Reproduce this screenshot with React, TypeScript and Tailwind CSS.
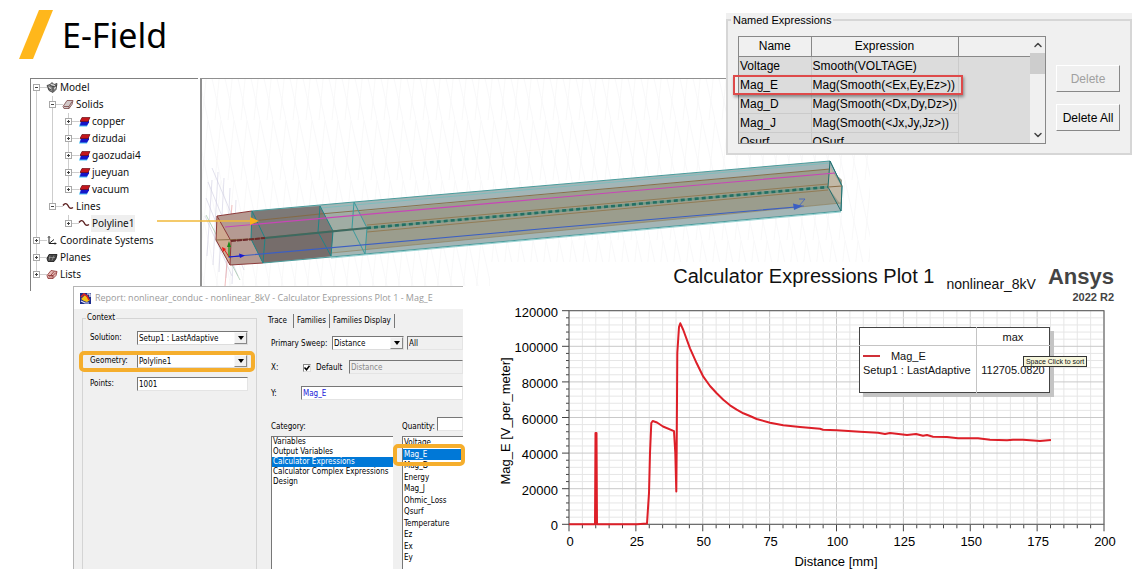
import { useState } from "react";
import { ChevronDown, ChevronUp } from "lucide-react";

type IconName = "model" | "solids" | "material" | "curve" | "axes" | "planes" | "lists";

type Node = {
  label: string;
  level: number;
  icon: IconName;
  open?: boolean;
  last?: boolean;
  guides: number[];
  selected?: boolean;
};

const NODES: Node[] = [
  { label: "Model", level: 0, icon: "model", open: true, guides: [] },
  { label: "Solids", level: 1, icon: "solids", open: true, guides: [0] },
  { label: "copper", level: 2, icon: "material", guides: [0, 1] },
  { label: "dizudai", level: 2, icon: "material", guides: [0, 1] },
  { label: "gaozudai4", level: 2, icon: "material", guides: [0, 1] },
  { label: "jueyuan", level: 2, icon: "material", guides: [0, 1] },
  { label: "vacuum", level: 2, icon: "material", guides: [0, 1], last: true },
  { label: "Lines", level: 1, icon: "curve", open: true, guides: [0], last: true },
  { label: "Polyline1", level: 2, icon: "curve", guides: [0], last: true, selected: true },
  { label: "Coordinate Systems", level: 0, icon: "axes", guides: [] },
  { label: "Planes", level: 0, icon: "planes", guides: [] },
  { label: "Lists", level: 0, icon: "lists", guides: [], last: true },
];

const EXPRESSIONS = [
  ["Voltage", "Smooth(VOLTAGE)"],
  ["Mag_E", "Mag(Smooth(<Ex,Ey,Ez>))"],
  ["Mag_D", "Mag(Smooth(<Dx,Dy,Dz>))"],
  ["Mag_J", "Mag(Smooth(<Jx,Jy,Jz>))"],
  ["Qsurf", "QSurf"],
];

const CATEGORIES = [
  "Variables",
  "Output Variables",
  "Calculator Expressions",
  "Calculator Complex Expressions",
  "Design",
];

const QUANTITIES = [
  "Voltage",
  "Mag_E",
  "Mag_D",
  "Energy",
  "Mag_J",
  "Ohmic_Loss",
  "Qsurf",
  "Temperature",
  "Ez",
  "Ex",
  "Ey",
];

function NodeIcon({ name, x }: { name: IconName; x: number }) {
  return (
    <g transform={`translate(${x} 8.5)`} fill="none">
      {name === "model" && (
        <g stroke="#333" strokeWidth="0.8">
          <path d="M-5-2 L-2-3 L0-5 L2-3 L5-4 L4 2 L1 5 L-3 3 Z" fill="#8a8a8a" />
          <path d="M-2-2 L1-1 L1 4 M1-1 L5-2 M-4 1 L-1 2" />
          <path d="M-1-3 L3-2 M2 1 L4 0 M-3 0 L-1 1" stroke="#fff" />
        </g>
      )}
      {name === "solids" && (
        <g stroke="#7a4545" strokeWidth="0.8">
          <path d="M-5 2 L-1-4 H5 L4 0 L1 4 L-4 4 Z" fill="#d2c8c8" />
          <path d="M-4 2 H1 L4-3 M1 2 V4" />
        </g>
      )}
      {name === "material" && (
        <g>
          <path d="M-4 2 H4 L3 5 H-5 Z" fill="#46bff5" />
          <path d="M-3-1 H5 V1 L3 4 H-4 Z" fill="#1616c8" />
          <path d="M-2-4 H6 L4 0 H-4 Z" fill="#c4161c" stroke="#6a0f14" strokeWidth="0.7" />
        </g>
      )}
      {name === "curve" && (
        <path d="M-5-1 C-3-4-1-3 0-1 S2 3 5 1" stroke="#5a1e1e" strokeWidth="1.4" />
      )}
      {name === "axes" && (
        <g stroke="#222" strokeWidth="1">
          <path d="M-3-4 V3 H4 M-3 3 L2-1" />
          <path d="M-4-3 L-3-4 L-2-3 M3 2 L4 3 L3 4" />
        </g>
      )}
      {name === "planes" && (
        <g stroke="#111" strokeWidth="0.8">
          <path d="M-5 1 L-3-3 H5 L4 1 L2 4 H-4 Z" fill="#444" />
          <path d="M-3 0 H3 M-2-2 L-3 3 M2-2 L0 3" stroke="#bbb" strokeWidth="0.5" />
        </g>
      )}
      {name === "lists" && (
        <g stroke="#8a2f2f" strokeWidth="0.8">
          <path d="M-5 1 L-1-4 L5-3 L4 1 L1 4 L-4 4 Z" fill="#e5b9b5" />
          <path d="M-3 3 L2-3 M-1 3 L4-2 M-4 1 H1 L1 4" />
        </g>
      )}
    </g>
  );
}

function TreeRow({ node }: { node: Node }) {
  const cx = 5 + node.level * 16;
  const top = node.label === "Model" ? 8 : 0;
  return (
    <li className="flex h-[17px] items-center">
      <svg
        width={cx + 24}
        height="17"
        className="block shrink-0"
        shapeRendering="crispEdges"
      >
        <g stroke="#cdcdcd">
          {node.guides.map((g) => (
            <line key={g} x1={5.5 + g * 16} x2={5.5 + g * 16} y1="0" y2="17" />
          ))}
          <line x1={cx + 0.5} x2={cx + 0.5} y1={top} y2={node.last ? 8 : 17} />
          <line x1={cx} x2={cx + 11} y1="8.5" y2="8.5" />
        </g>
        <rect x={cx - 2.5} y="5.5" width="6" height="6" fill="#fff" stroke="#a8a8a8" />
        <path
          d={`M${cx - 1} 8.5 h3${node.open ? "" : ` M${cx + 0.5} 7 v3`}`}
          stroke="#444"
        />
        <g shapeRendering="geometricPrecision">
          <NodeIcon name={node.icon} x={cx + 16} />
        </g>
      </svg>
      <span
        className={
          node.selected
            ? "-ml-px bg-[#efefef] px-px text-[10px] leading-[17px]"
            : "text-[10px] leading-[17px]"
        }
      >
        {node.label}
      </span>
    </li>
  );
}

function ModelTree() {
  return (
    <nav className="w-[168px] shrink-0 border-t border-l border-[#808080] pb-2 text-[#111] font-['Noto_Sans','Open_Sans',sans-serif]">
      <ul>
        {NODES.map((n) => (
          <TreeRow key={n.label} node={n} />
        ))}
      </ul>
    </nav>
  );
}

function Scene() {
  return (
    <svg
      viewBox="202 79 668 207"
      className="block w-full max-w-[668px]"
      role="img"
      aria-label="Model view"
    >
      <defs>
        <pattern id="mesh" width="13" height="60" patternUnits="userSpaceOnUse">
          <path d="M0 0 L13 60 M13 0 L7 60" stroke="#f6f6f7" strokeWidth="0.8" fill="none" />
        </pattern>
      </defs>
      <rect x="202" y="79" width="668" height="207" fill="url(#mesh)" />

      {/* reference grid at the origin */}
      <path
        d="M212 168 L250 258 M208 182 L244 270 M206 198 L238 276 M205 216 L232 276 M218 172 L213 265 M224 178 L219 272 M212 180 L207 256 M230 188 L226 278 M236 200 L232 284"
        stroke="#cfcde0"
        strokeWidth="0.6"
        fill="none"
      />
      <path d="M232 205 L225 286" stroke="#eba0a0" strokeWidth="0.7" />
      <path d="M206 215 L240 280" stroke="#9cc3a4" strokeWidth="0.7" />

      {/* insulation */}
      <path d="M252 211 L354 202 L830 161 L842 186 L841 211 L365 254 L263 263 L251 239 Z" fill="#a3b5b6" />
      <path d="M320 215 L830 169 L842 180 L841 203 L331 253 Z" fill="#9b9d8d" />
      <path d="M320 206 L354 202 L367 228 L365 254 L331 256 L333 231 Z" fill="#a4b8b4" fillOpacity="0.6" />
      <path d="M828 187 L830 167 L842 187 L841 205 Z" fill="#c2b8a6" />

      {/* electrode blocks */}
      <path d="M217 216 L252 211 L265 238 L263 263 L230 265 L216 240 Z" fill="#b59a92" />
      <path d="M217 216 L231 241 L230 265 L216 240 Z" fill="#cfab92" />
      <path d="M252 211 L320 206 L333 231 L331 256 L263 263 L251 239 Z" fill="#7d7977" />
      <path d="M251 239 L333 231 L331 256 L263 263 Z" fill="#766d6b" />

      {/* edges */}
      <g fill="none" strokeWidth="1">
        <path d="M217 216 L252 211 M217 216 L231 241 L230 265 L216 240 Z M230 265 L263 263 M231 241 L265 238" stroke="#8c3a3a" />
        <path d="M216 240 L251 239 L352 229 M252 221 L320 214 L830 169" stroke="#86683f" strokeWidth="0.9" />
        <path d="M367 225 L828 184 M367 232 L828 190" stroke="#8f7448" strokeWidth="0.8" />
        <path d="M331 253 L841 203" stroke="#8f7d58" strokeWidth="0.6" />
        <path d="M252 211 L354 202 L830 161 L842 186 L841 211 L365 254 L263 263" stroke="#4a9c9c" />
        <path d="M320 208 L830 163 M331 258 L841 212" stroke="#6fc0c0" strokeWidth="0.7" />
        <path d="M252 211 L265 238 L263 263 L251 239 Z M320 206 L333 231 L331 256 L318 232 Z" stroke="#1e8486" />
        <path d="M354 202 L367 228 L365 254 L352 228 Z" stroke="#3a9a9c" />
        <path d="M830 161 L842 186 L841 211 L828 187 Z" stroke="#236f6f" />
        <path d="M828 187 L842 186" stroke="#8b6c46" />
      </g>
      <path d="M231 241 L265 238" stroke="#6d2a2a" strokeWidth="2" strokeDasharray="5 1" />
      <path d="M265 238 L367 228" stroke="#3d6a60" strokeWidth="2" />
      <path d="M367 228 L828 187" stroke="#6f9a86" strokeWidth="2.6" />
      <path d="M367 228 L828 187" stroke="#236f64" strokeWidth="2.6" strokeDasharray="4 3" />

      <path d="M225 227 L540 199 L835 173" stroke="#c846b8" strokeWidth="1.2" fill="none" />
      <path d="M228 257 L540 229 L796 207" stroke="#3b5fc4" strokeWidth="1.1" fill="none" />
      <path d="M793 203.500 L803 206 L794 210 Z" fill="#3b5fc4" />
      <path d="M799 199 H805 L799 206 H804" stroke="#3b5fc4" strokeWidth="0.8" fill="none" />

      {/* local axes */}
      <path d="M229 257 V245" stroke="#188a18" strokeWidth="1.2" />
      <path d="M229 241 L227 247 H231 Z" fill="#188a18" />
      <path d="M229 257 L224 249" stroke="#e02020" strokeWidth="1" />
      <path d="M222 247 L226 249 L223 252 Z" fill="#f01818" />
      <path d="M229 257 L240 256" stroke="#1818d0" strokeWidth="1.2" />
      <path d="M239 253.500 L245 255.500 L240 258 Z" fill="#1818d0" />
    </svg>
  );
}

function NamedExpressions() {
  return (
    <section className="absolute top-[13px] right-[11px] z-10 bg-[#f0f0f0] text-black font-['Liberation_Sans',Arial,sans-serif]">
      <fieldset className="border-2 border-[#d6d6d6] pb-[9px]">
        <legend className="ml-[3px] px-0.5 text-[11px] leading-[14px]">
          Named Expressions
        </legend>
        <div className="flex gap-[10px] px-[10px] pt-[9px]">
          <div className="relative">
            <div className="flex h-[108px] w-[308px] overflow-hidden border border-[#888] bg-[#dcdcdc]">
              <table className="w-[291px] shrink-0 table-fixed self-start border-collapse text-[12px] leading-[18px]">
                <thead>
                  <tr className="h-[19px] bg-[#f0f0f0]">
                    <th className="w-[72px] border-r border-b border-[#888] p-0 font-normal">Name</th>
                    <th className="w-[147px] border-r border-b border-[#888] p-0 font-normal">
                      Expression
                    </th>
                    <th className="border-b border-[#888] p-0" />
                  </tr>
                </thead>
                <tbody>
                  {EXPRESSIONS.map(([name, expr]) => (
                    <tr key={name} className="h-[19px]">
                      <td className="border-r border-b border-[#cbcbcb] py-0 pr-0 pl-px">{name}</td>
                      <td className="border-r border-b border-[#cbcbcb] py-0 pr-0 pl-px whitespace-nowrap">
                        {expr}
                      </td>
                      <td className="p-0" />
                    </tr>
                  ))}
                </tbody>
              </table>
              <div className="flex flex-1 flex-col items-center bg-[#f0f0f0]">
                <ChevronUp className="h-4 w-3 text-[#444]" strokeWidth={3} />
                <span className="h-[21px] w-[15px] bg-[#cdcdcd]" />
                <ChevronDown className="mt-auto h-4 w-3 text-[#444]" strokeWidth={3} />
              </div>
            </div>
            <span className="absolute top-[39px] -left-[5px] h-[20px] w-[230px] border-2 border-[#de4a4a] shadow-[1px_2px_3px_rgba(0,0,0,0.4)]" />
          </div>
          <div className="flex flex-col gap-[12px] pt-[29px] text-[12px]">
            <button
              type="button"
              disabled
              className="h-[27px] w-[64px] border border-t-white border-r-[#888] border-b-[#888] border-l-white text-[#a0a0a0]"
            >
              Delete
            </button>
            <button
              type="button"
              className="h-[27px] w-[64px] border border-t-white border-r-[#888] border-b-[#888] border-l-white whitespace-nowrap"
            >
              Delete All
            </button>
          </div>
        </div>
      </fieldset>
    </section>
  );
}

function DropDown({ id, value, className }: { id: string; value: string; className: string }) {
  return (
    <span className={`relative block ${className}`}>
      <select
        id={id}
        className="block h-[14px] w-full appearance-none border border-t-[#777] border-r-[#ddd] border-b-[#ddd] border-l-[#777] bg-white pl-px text-[8px] leading-[11px]"
      >
        <option>{value}</option>
      </select>
      <span className="pointer-events-none absolute top-px right-px flex h-3 w-[13px] items-center justify-center border border-t-[#f8f8f8] border-r-[#888] border-b-[#888] border-l-[#f8f8f8] bg-[#f0f0f0]">
        <svg width="6" height="4" viewBox="0 0 6 4">
          <path d="M0 0 H6 L3 4 Z" fill="#000" />
        </svg>
      </span>
    </span>
  );
}

const FIELD =
  "block h-[14px] border border-t-[#777] border-l-[#777] border-r-[#e4e4e4] border-b-[#e4e4e4] pl-px text-[8px] leading-[11px]";

function ReportDialog() {
  const [useDefault, setUseDefault] = useState(true);
  const [category, setCategory] = useState("Calculator Expressions");
  const [quantity, setQuantity] = useState("Mag_E");

  return (
    <section className="relative z-10 w-[390px] shrink-0 border-t border-l border-[#b5b5b5] bg-[#f0f0f0] text-[8px] leading-[10px] text-black font-['DejaVu_Sans_Condensed','DejaVu_Sans',sans-serif]">
      <header className="flex h-[22px] items-center gap-1 bg-white pl-[6px]">
        <svg width="11" height="11" viewBox="0 0 11 11">
          <rect width="11" height="11" fill="#1d2c8c" />
          <path d="M1 6 L5 2 L7 4 L10 7 L7 9 L4 8 Z" fill="#f6c315" />
          <path d="M1 4 L4 1 L7 3 L9 7" stroke="#e0281e" strokeWidth="1.6" fill="none" />
          <path d="M1 8 L5 10 L9 10" stroke="#e8e8f8" strokeWidth="1.2" fill="none" />
          <path d="M7 1 L10 1 L10 4" stroke="#fff" strokeWidth="1.2" fill="none" />
        </svg>
        <h2 className="text-[9px] whitespace-nowrap text-[#9a9a9a] font-['Open_Sans','Noto_Sans',sans-serif]">
          Report: nonlinear_conduc - nonlinear_8kV - Calculator Expressions Plot 1 - Mag_E
        </h2>
      </header>
      <div className="flex h-[260px]">
        <fieldset className="mt-1 ml-2 w-[174px] shrink-0 border border-b-0 border-[#d4d4d4]">
          <legend className="ml-[3px] px-px">Context</legend>
          <div className="grid grid-cols-[47px_1fr] gap-y-[9px] pt-2 pr-2 pl-[7px]">
            <label htmlFor="solution" className="leading-[14px]">Solution:</label>
            <DropDown id="solution" value="Setup1 : LastAdaptive" className="w-[111px]" />
            <div className="relative col-span-2 grid grid-cols-[47px_1fr]">
              <label htmlFor="geometry" className="leading-[14px]">Geometry:</label>
              <DropDown id="geometry" value="Polyline1" className="w-[111px]" />
              <span className="pointer-events-none absolute -top-[3px] -right-[7px] -bottom-1 -left-[11px] rounded-[5px] border-4 border-[#f5ae2d]" />
            </div>
            <label htmlFor="points" className="leading-[14px]">Points:</label>
            <input id="points" defaultValue="1001" className={`${FIELD} w-[111px] bg-white`} />
          </div>
        </fieldset>

        <div className="ml-2 min-w-0 flex-1 pt-[5px]">
          <div role="tablist" className="flex pl-[3px]">
            <button type="button" role="tab" className="h-[14px] border-r border-[#777] pr-[6px]">
              Trace
            </button>
            <button type="button" role="tab" className="h-[14px] border-r border-[#777] px-[3px]">
              Families
            </button>
            <button type="button" role="tab" className="h-[14px] border-r border-[#777] px-[3px]">
              Families Display
            </button>
          </div>
          <div className="flex flex-col gap-[9px] pt-2 pl-[6px]">
            <div className="flex">
              <label htmlFor="sweep" className="w-[61px] leading-[15px]">Primary Sweep:</label>
              <DropDown id="sweep" value="Distance" className="w-[72px]" />
              <input
                aria-label="Sweep values"
                defaultValue="All"
                className={`${FIELD} ml-[3px] min-w-0 flex-1`}
              />
            </div>
            <div className="flex">
              <span className="w-8 leading-[15px]">X:</span>
              <label className="flex w-[46px] items-center gap-[5px]">
                <span className="relative flex h-2 w-2">
                  <input
                    type="checkbox"
                    checked={useDefault}
                    onChange={(e) => setUseDefault(e.target.checked)}
                    className="h-2 w-2 appearance-none border border-t-[#888] border-l-[#888] border-[#ddd] bg-white"
                  />
                  {useDefault && (
                    <svg className="pointer-events-none absolute inset-0" viewBox="0 0 8 8">
                      <path d="M1.500 3.500 L3.500 5.800 L6.500 1.800" stroke="#000" strokeWidth="1.500" fill="none" />
                    </svg>
                  )}
                </span>
                Default
              </label>
              <input
                aria-label="X component"
                disabled
                defaultValue="Distance"
                className={`${FIELD} min-w-0 flex-1 text-[#888]`}
              />
            </div>
            <div className="flex pt-[2px]">
              <label htmlFor="ycomp" className="w-[30px] leading-[16px]">Y:</label>
              <input
                id="ycomp"
                defaultValue="Mag_E"
                className={`${FIELD} min-w-0 flex-1 bg-white text-[#1a1ad8]`}
              />
            </div>
          </div>

          <div className="grid grid-cols-[122px_minmax(0,1fr)] gap-x-[9px] pt-[15px] pl-[6px]">
            <span className="leading-[19px]">Category:</span>
            <div className="flex h-[19px]">
              <label htmlFor="quantity" className="w-[35px] leading-[19px]">Quantity:</label>
              <input id="quantity" className={`${FIELD} min-w-0 flex-1 bg-white`} />
            </div>
            <ul
              role="listbox"
              aria-label="Category"
              className="h-[133px] border-t border-l border-[#777] bg-white"
            >
              {CATEGORIES.map((c) => (
                <li
                  key={c}
                  role="option"
                  aria-selected={c === category}
                  onClick={() => setCategory(c)}
                  className="pl-px whitespace-nowrap aria-selected:bg-[#0078d7] aria-selected:text-white"
                >
                  {c}
                </li>
              ))}
            </ul>
            <div className="relative">
              <ul
                role="listbox"
                aria-label="Quantity"
                className="grid h-[128px] auto-rows-fr border-t border-l border-[#777] bg-white"
              >
                {QUANTITIES.map((q) => (
                  <li
                    key={q}
                    role="option"
                    aria-selected={q === quantity}
                    onClick={() => setQuantity(q)}
                    className="pl-px leading-[11px] aria-selected:bg-[#0078d7] aria-selected:text-white"
                  >
                    {q}
                  </li>
                ))}
              </ul>
              <div className="h-[5px] border-l border-[#777] bg-white" />
              <span className="pointer-events-none absolute top-2 -right-0.5 -left-[9px] h-[22px] rounded-[5px] border-4 border-[#f5ae2d]" />
            </div>
          </div>
        </div>
      </div>
    </section>
  );
}

const LEFT = 569;
const RIGHT = 1104;
const TOP = 310.7;
const BOTTOM = 524.3;

const TRACE =
  "569,524.3 595,524.3 595.5,433 596.5,433 597,524.3 637,524.3 647,523.5 649,493 650,453 651.3,423 652.7,421 657,422.5 663,426.5 674,431.2 675.3,453 676.3,491.500 676.7,447 677.3,353 679,327 680.3,323.3 683.3,330 690,348.3 696.7,363.3 703.3,376.7 710,386 716.7,393.3 723.3,399.7 730,405.3 736.7,409.7 743.3,413.3 750,416 756.7,419 770,422.7 783.3,425.3 800,427 820,428.7 823,429.7 836.7,430.3 860,431.7 878,432.7 885,434 890,433 907,435 916,434 923,435.7 927,435 933,436.7 947,437 958,438.3 978,438.3 990,439.7 1007,440.3 1013,439.7 1023,439.7 1030,440.3 1040,441 1051,440";

function Plot() {
  const cols = Array.from({ length: 41 }, (_, i) => LEFT + (i * (RIGHT - LEFT)) / 40);
  const rows = Array.from({ length: 31 }, (_, i) => BOTTOM - (i * (BOTTOM - TOP)) / 30);
  return (
    <svg
      viewBox="490 304 653 271"
      className="block w-full font-['Liberation_Sans',Arial,sans-serif]"
      fontSize="13"
      role="img"
      aria-label="Mag_E over distance"
    >
      {cols.map((x, i) => (
        <g key={x}>
          <line x1={x} x2={x} y1={TOP} y2={BOTTOM} stroke={i % 5 ? "#e6e6e6" : "#c9c9c9"} />
          <line x1={x} x2={x} y1={BOTTOM} y2={BOTTOM + (i % 5 ? 4 : 7)} stroke="#444" />
        </g>
      ))}
      {rows.map((y, i) => (
        <g key={y}>
          <line x1={LEFT} x2={RIGHT} y1={y} y2={y} stroke={i % 5 ? "#e6e6e6" : "#c9c9c9"} />
          <line x1={LEFT - (i % 5 ? 3 : 7)} x2={LEFT} y1={y} y2={y} stroke="#444" />
        </g>
      ))}
      <rect
        x={LEFT}
        y={TOP}
        width={RIGHT - LEFT}
        height={BOTTOM - TOP}
        fill="none"
        stroke="#555"
      />
      {[0, 20000, 40000, 60000, 80000, 100000, 120000].map((v) => (
        <text key={v} x="558" y={BOTTOM + 6 - (v / 120000) * (BOTTOM - TOP)} textAnchor="end">
          {v}
        </text>
      ))}
      {[0, 25, 50, 75, 100, 125, 150, 175, 200].map((v) => (
        <text key={v} x={LEFT + 1 + (v / 200) * (RIGHT - LEFT)} y="546" textAnchor="middle">
          {v}
        </text>
      ))}
      <text x="836" y="566" textAnchor="middle">Distance [mm]</text>
      <text transform="translate(510 421) rotate(-90)" textAnchor="middle">
        Mag_E [V_per_meter]
      </text>
      <polyline points={TRACE} fill="none" stroke="#dd1f28" strokeWidth="2" strokeLinejoin="round" />
    </svg>
  );
}

function Chart() {
  return (
    <section className="-mt-6 min-w-0 flex-1 bg-white text-[#111] font-['Liberation_Sans',Arial,sans-serif]">
      <header className="flex h-[42px] items-start justify-end gap-3 pr-[29px] whitespace-nowrap">
        <h2 className="text-[20px] leading-7">Calculator Expressions Plot 1</h2>
        <span className="mt-[13px] text-[14px] leading-[18px]">nonlinear_8kV</span>
        <div className="mt-px text-right font-bold text-[#444]">
          <p className="text-[22px] leading-7">Ansys</p>
          <p className="text-[11px] leading-3">2022 R2</p>
        </div>
      </header>
      <div className="relative">
        <Plot />
        <div className="absolute top-[23px] left-[56.500%]">
          <table className="h-[66px] w-[191px] table-fixed border-collapse border border-[#444] bg-white text-[11px] leading-[14px] shadow-[4px_4px_0_#c4c4c4]">
            <thead>
              <tr className="h-[18px]">
                <th className="w-[117px] border-r border-b border-[#c4c4c4] p-0" />
                <th className="border-b border-[#c4c4c4] p-0 font-normal">max</th>
              </tr>
            </thead>
            <tbody>
              <tr>
                <td className="border-r border-[#c4c4c4] py-0 pt-[3px] pr-0 pl-[3px] align-top whitespace-nowrap">
                  <span className="flex items-center gap-[11px]">
                    <span className="h-0.5 w-[17px] bg-[#d03038]" />
                    Mag_E
                  </span>
                  Setup1 : LastAdaptive
                </td>
                <td className="p-0 pt-[17px] text-center align-top">112705.0820</td>
              </tr>
            </tbody>
          </table>
          <span className="absolute top-[29px] left-[164px] border border-[#333] bg-[#f6f6dc] px-0.5 text-[7px] leading-[9px] whitespace-nowrap">
            Space Click to sort
          </span>
        </div>
      </div>
    </section>
  );
}

export default function App() {
  return (
    <main className="relative overflow-hidden bg-white">
      <header className="flex h-[78px] items-start gap-[9px] pt-[10px] pl-[19px]">
        <svg width="34" height="49" viewBox="0 0 34 49">
          <path d="M20 0 H34 L14 49 H0 Z" fill="#ffb71b" />
        </svg>
        <h1 className="text-[34px] leading-[50px] text-black font-['Noto_Sans','Open_Sans',sans-serif]">
          E-Field
        </h1>
      </header>
      <NamedExpressions />
      <div className="relative flex items-start gap-[2px] pl-[30px]">
        <ModelTree />
        <div className="min-w-0 max-w-[670px] flex-1 border-t border-l-2 border-[#909090]">
          <Scene />
        </div>
        {/* callout from the tree item to the model */}
        <svg className="absolute top-[138px] left-[157px]" width="103" height="10">
          <path d="M0 5 H94" stroke="#f0b93a" strokeWidth="1.4" />
          <path d="M93 1 L102 5 L93 9 Z" fill="#fbb01c" />
        </svg>
      </div>
      <div className="relative -mt-[5px] flex items-start gap-[27px] pl-[73px]">
        <ReportDialog />
        <Chart />
      </div>
    </main>
  );
}
